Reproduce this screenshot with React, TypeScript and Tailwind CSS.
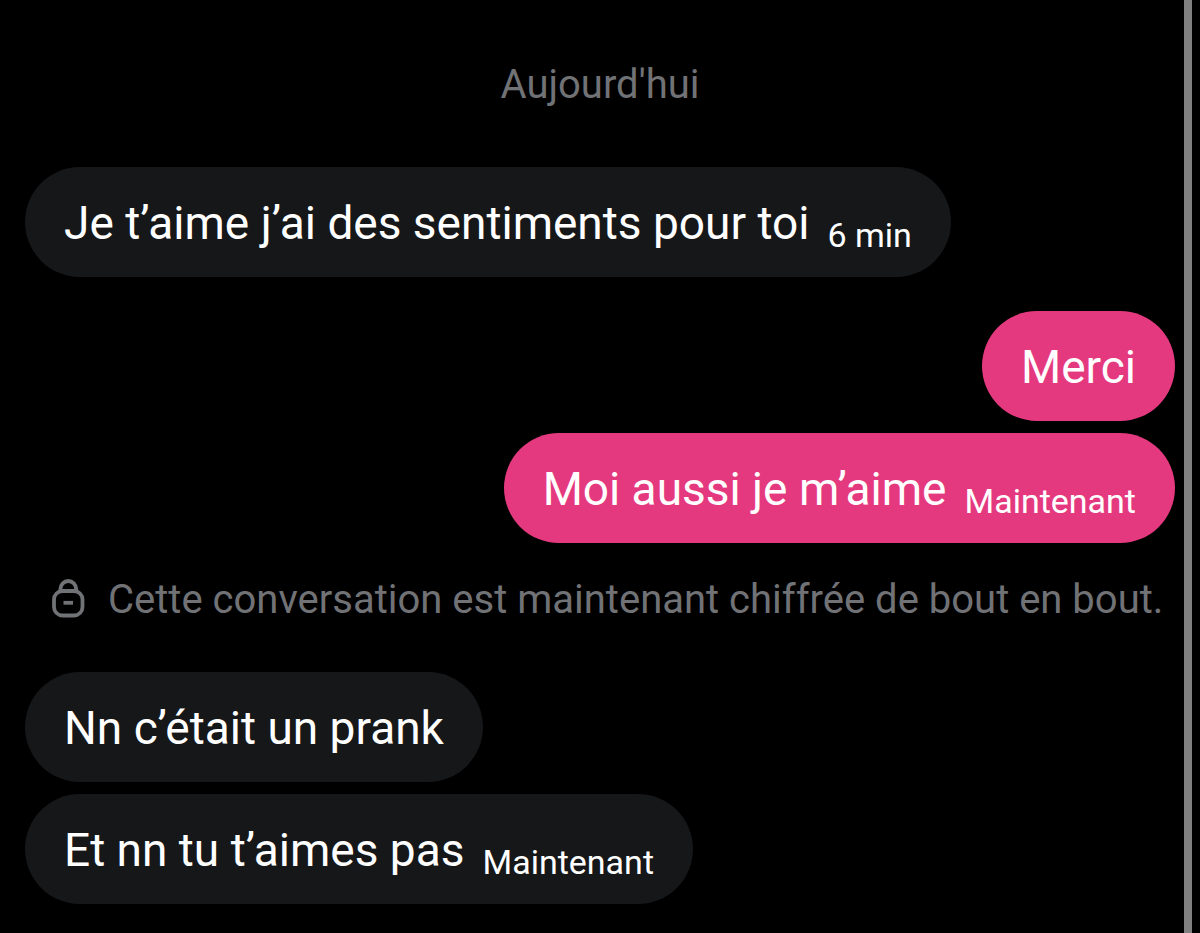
import { ReactNode } from 'react'

type Message = {
  text: string
  time?: string
  mine?: boolean
}

function Bubble({ text, time, mine }: Message) {
  return (
    <li
      className={
        mine
          ? 'flex h-[110px] items-center self-end rounded-[55px] bg-[#e5397f] px-[39px] pt-0.5'
          : 'flex h-[110px] items-center self-start rounded-[55px] bg-[#161719] px-[39px] pt-0.5'
      }
    >
      <p className="flex items-baseline gap-[18px] whitespace-nowrap">
        <span className="text-[46px] leading-[56px]">{text}</span>
        {time && <time className="translate-y-2 text-[34px] leading-10">{time}</time>}
      </p>
    </li>
  )
}

function MessageGroup({ children }: { children: ReactNode }) {
  return <ul className="flex flex-col gap-3">{children}</ul>
}

function LockIcon() {
  return (
    <svg
      viewBox="0 0 34 40"
      className="h-10 w-[34px] shrink-0 overflow-visible"
      fill="none"
      stroke="currentColor"
      strokeWidth="3.8"
      aria-hidden="true"
    >
      <rect x="3" y="11" width="28.5" height="24.5" rx="8.5" />
      <path d="M9.5 11.5V8.8a7.8 7.8 0 0 1 15.6 0v2.7" />
      <path d="M12.5 22.8h9.5" />
    </svg>
  )
}

export default function App() {
  return (
    <div className="flex min-h-screen bg-black font-['Roboto',sans-serif] text-white">
      <main className="flex min-w-0 flex-1 flex-col pt-[61px] pr-[9px] pb-[29px] pl-[25px]">
        <h2 className="mb-[58px] text-center text-[40px] leading-[48px] text-[#717276]">Aujourd'hui</h2>

        <MessageGroup>
          <Bubble text="Je t’aime j’ai des sentiments pour toi" time="6 min" />
        </MessageGroup>

        <div className="mt-[34px]">
          <MessageGroup>
            <Bubble mine text="Merci" />
            <Bubble mine text="Moi aussi je m’aime" time="Maintenant" />
          </MessageGroup>
        </div>

        <p className="mt-[33px] mb-12 flex items-center gap-[23px] pl-[26px] text-[40px] leading-[48px] whitespace-nowrap text-[#717276]">
          <LockIcon />
          Cette conversation est maintenant chiffrée de bout en bout.
        </p>

        <MessageGroup>
          <Bubble text="Nn c’était un prank" />
          <Bubble text="Et nn tu t’aimes pas" time="Maintenant" />
        </MessageGroup>
      </main>
      <div className="mr-2 w-2 shrink-0 bg-[#808080]" />
    </div>
  )
}
